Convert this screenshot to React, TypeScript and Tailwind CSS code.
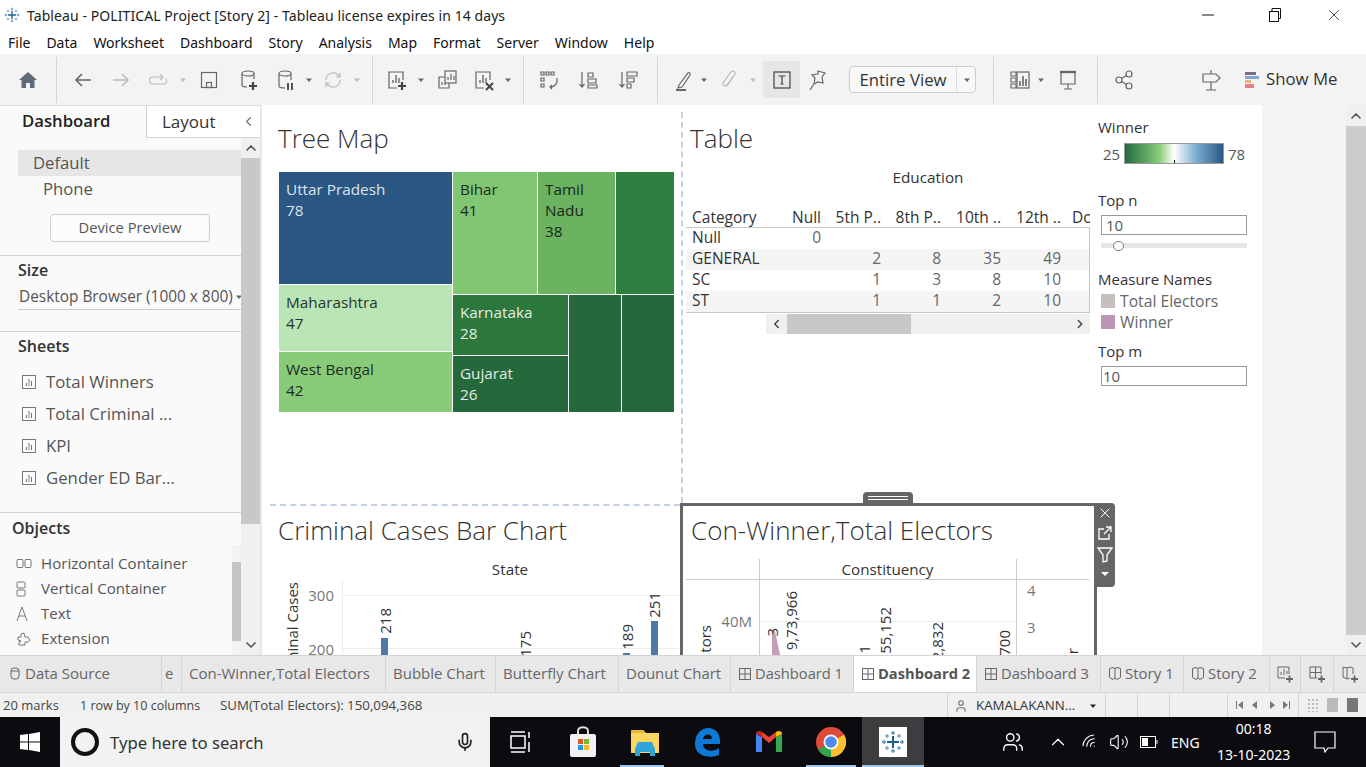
import { ReactNode } from "react";
import { X, ChevronUp, ChevronDown, ChevronLeft, ChevronRight, Wifi, Volume2, User, Users, Mic } from "lucide-react";

const Ico = ({ children, c = "#666" }: { children: ReactNode; c?: string }) => (
  <svg width="24" height="24" viewBox="0 0 24 24" fill="none" stroke={c} strokeWidth="1.2" className="shrink-0">
    {children}
  </svg>
);

const Caret = ({ ml, c = "#666" }: { ml: string; c?: string }) => (
  <svg width="8" height="24" viewBox="0 0 8 24" className={`shrink-0 ${ml}`}>
    <path d="M1 10.5h6L4 14z" fill={c} />
  </svg>
);

const Sep = ({ ml }: { ml: string }) => <div className={`w-px h-[46px] bg-[#d4d4d4] shrink-0 ${ml}`} />;

const Plus = () => <path d="M13 18h8M17 14v8" stroke="#444" strokeWidth="2.2" />;

const Bars = () => <path d="M8 15v-3M11 15V7M14 15v-5" strokeWidth="1.4" />;

const TableauMark = ({ size = 16 }: { size?: number }) => (
  <svg width={size} height={size} viewBox="0 0 24 24" stroke="#2f6f9f" strokeWidth="1.4" fill="none">
    <path d="M12 6v12M6 12h12" strokeWidth="2" stroke="#1f5f8f" />
    <path d="M12 1v4M10 3h4M12 19v4M10 21h4M1 12h4M3 10v4M19 12h4M21 10v4" stroke="#5a94bd" />
    <path d="M6 4v4M4 6h4M18 4v4M16 6h4M6 16v4M4 18h4M18 16v4M16 18h4" stroke="#7aa7c7" />
  </svg>
);

const Toolbar = () => (
  <div className="h-[51px] bg-[#f3f3f3] flex items-center shrink-0">
    <div className="ml-4">
      <svg width="24" height="24" viewBox="0 0 24 24" fill="#5f6b7a"><path d="M12 4l9 8h-2.500v8h-4.500v-5h-4v5H5.500v-8H3z" /></svg>
    </div>
    <Sep ml="ml-4" />
    <div className="ml-[14px]"><Ico><path d="M20 12H5M11 6l-6 6 6 6" strokeWidth="1.6" /></Ico></div>
    <div className="ml-[14px]"><Ico c="#bbb"><path d="M4 12h15M13 6l6 6-6 6" strokeWidth="1.6" /></Ico></div>
    <div className="ml-[13px]"><Ico c="#bbb"><path d="M17 9H7a3 3 0 0 0 0 7h11a3 3 0 0 0 2-5M14 6l3 3-3 3" /></Ico></div>
    <Caret ml="ml-[9px]" c="#bbb" />
    <div className="ml-[10px]"><Ico><rect x="4.500" y="4.500" width="15" height="15" /><rect x="9.500" y="14.500" width="5" height="5" /></Ico></div>
    <div className="ml-[15px]"><Ico><path d="M6 6v11c0 1 1 2 5 2M18 6v5" /><ellipse cx="12" cy="5.500" rx="6" ry="2.500" /><Plus /></Ico></div>
    <div className="ml-[13px]"><Ico><path d="M6 6v12c0 1 2 2 6 2M18 6v6" /><ellipse cx="12" cy="5.500" rx="6" ry="2.500" /><path d="M15 15v7M19 15v7" stroke="#444" strokeWidth="1.8" /></Ico></div>
    <Caret ml="ml-2" />
    <div className="ml-2"><Ico c="#bbb"><path d="M5 12a7 7 0 0 1 12-5l2 2M19 12a7 7 0 0 1-12 5l-2-2M19 5v4h-4M5 19v-4h4" /></Ico></div>
    <Caret ml="ml-2" c="#bbb" />
    <Sep ml="ml-[11px]" />
    <div className="ml-3"><Ico><path d="M18 12V4H4v16h8" /><Bars /><Plus /></Ico></div>
    <Caret ml="ml-2" />
    <div className="ml-[10px]"><Ico><rect x="10" y="3" width="11" height="12" /><path d="M13 12V9M16 12V6M19 12V8" /><path d="M10 9H4v11h10v-5" /><path d="M7 17v-3M10 17v-2" /></Ico></div>
    <div className="ml-[13px]"><Ico><path d="M18 12V4H4v16h8" /><Bars /><path d="M14 15l7 7M21 15l-7 7" stroke="#444" strokeWidth="2" /></Ico></div>
    <Caret ml="ml-2" />
    <Sep ml="ml-[11px]" />
    <div className="ml-[13px]"><Ico><path d="M4 4h3v3H4zM9 4h3v3H9zM14 4h3v3h-3zM4 10h3v3H4zM4 16h3v3H4z" /><path d="M20 10c1 5-2 9-7 9M15 17l-2 2 2 2" /></Ico></div>
    <div className="ml-[15px]"><Ico><path d="M6 4v15M3.500 16L6 19l2.500-3" /><path d="M12 5h5v4h-5zM12 11h8v4h-8z" /><path d="M12 17h9v3h-9z" /></Ico></div>
    <div className="ml-4"><Ico><path d="M6 4v15M3.500 16L6 19l2.500-3" /><path d="M11 4h10v4H11zM11 10h7v4h-7zM11 16h4v4h-4z" /></Ico></div>
    <Sep ml="ml-[17px]" />
    <div className="ml-[13px]"><Ico><path d="M8 17L17 5c1-1 3 0 2 2L11 19l-4 1z" /><path d="M5 22h10" strokeWidth="2" /></Ico></div>
    <Caret ml="ml-[5px]" />
    <div className="ml-[9px]"><Ico c="#bbb"><path d="M17 7l-7 10c-2 2-5 0-4-2l8-11c2-2 5 0 4 2l-8 12" /></Ico></div>
    <Caret ml="ml-2" c="#bbb" />
    <div className="ml-[6px] w-[37px] h-[37px] bg-[#e6e6e6] flex items-center justify-center shrink-0">
      <Ico c="#444"><rect x="4" y="4" width="16" height="16" /><path d="M8.500 8h7M12 8v8M10.500 16h3" /></Ico>
    </div>
    <div className="ml-[5px]"><Ico><path d="M13 3l7 2-3 4 1 6-5-1-4 2 1-6-3-3 6-1zM9 16l-4 6" /></Ico></div>
    <div className="ml-5 w-[127px] h-[27px] bg-[#f8f8f8] border border-[#ccc] rounded-sm flex items-center shrink-0">
      <span className="w-[107px] border-r border-[#ddd] h-full flex items-center justify-center text-[16.800px] text-[#333] whitespace-nowrap">Entire View</span>
      <Caret ml="ml-[6px]" />
    </div>
    <Sep ml="ml-[17px]" />
    <div className="ml-[14px]"><Ico><path d="M3 4h5v4H3zM3 10h5v4H3zM3 16h5v4H3z" /><rect x="9" y="4" width="12" height="16" /><path d="M12 18v-5M15 18V8M18 18v-7" strokeWidth="1.6" /></Ico></div>
    <Caret ml="ml-[5px]" />
    <div className="ml-[11px]"><Ico><path d="M4 4h16M5 5v11h14V5M12 16v5M8 21h8" /><path d="M4 4h16" strokeWidth="2.400" /></Ico></div>
    <Sep ml="ml-[17px]" />
    <div className="ml-[14px]"><Ico><circle cx="17" cy="6" r="3" /><circle cx="7" cy="12" r="3" /><circle cx="17" cy="18" r="3" /><path d="M9.500 10.500l5-3M9.500 13.500l5 3" /></Ico></div>
    <div className="ml-[63px]"><Ico><path d="M12 2v4M12 14v8M7 22h10M4 6h13l4 4-4 4H4z" /></Ico></div>
    <div className="ml-[22px] w-[14px] flex flex-col gap-px shrink-0">
      <div className="h-[3px] w-[11px] bg-[#7b6a8f]" />
      <div className="h-[3px] bg-[#7fa8cf]" />
      <div className="h-[3px] w-[6px] bg-[#eeb27b]" />
      <div className="h-[4px] w-[9px] bg-[#ee7c85]" />
    </div>
    <span className="ml-[7px] text-[16.800px] text-[#333] -mt-[2px]">Show Me</span>
  </div>
);

const SheetIcon = () => (
  <svg width="14" height="14" viewBox="0 0 14 14" fill="none" stroke="#777" className="shrink-0">
    <rect x=".5" y=".5" width="13" height="13" />
    <path d="M4.500 11V8M7 11V4M9.500 11V6" />
  </svg>
);

const LeftPanel = () => (
  <div className="w-[262px] bg-[#fafafa] flex flex-col shrink-0 border-r-2 border-[#e8e8e8]">
    <div className="flex h-[33px] shrink-0 border-t border-[#ddd]">
      <div className="w-[146px] pl-[22px] text-[16.700px] font-semibold text-[#222] leading-[30px]">Dashboard</div>
      <div className="flex-1 border-l border-b border-[#d4d4d4] flex items-center text-[#333] text-[17px] bg-white">
        <span className="ml-[15px]">Layout</span>
        <ChevronLeft className="ml-[25px] text-[#777]" size={15} />
      </div>
    </div>
    <div className="flex flex-1 min-h-0">
      <div className="w-[241px] shrink-0 flex flex-col">
        <div className="mt-3 ml-[18px] h-[26px] bg-[#e6e6e6] pl-[15px] text-[16.700px] leading-[26px] text-[#555]">Default</div>
        <div className="ml-[43px] h-[26px] text-[16.700px] leading-[26px] text-[#555]">Phone</div>
        <div className="mt-3 ml-[50px] w-[160px] h-[28px] border border-[#ccc] rounded-sm bg-[#fcfcfc] text-center text-[14.700px] leading-[24px] text-[#555]">Device Preview</div>
        <div className="mt-[13px] border-t border-[#d0d0d0] pt-[3px] pl-[18px] font-semibold text-[16px] leading-[22px] text-[#333]">Size</div>
        <div className="ml-[18px] mt-[4px] h-[25px] border-b border-[#ccc] flex items-center text-[15.400px] text-[#555] whitespace-nowrap overflow-hidden">
          <span className="ml-px">Desktop Browser (1000 x 800)</span>
          <Caret ml="ml-[2px]" />
        </div>
        <div className="mt-[21px] border-t border-[#d0d0d0] pt-[3px] pl-[18px] font-semibold text-[16px] leading-[22px] text-[#333]">Sheets</div>
        <div className="mt-[9px] ml-[22px] flex flex-col text-[16.800px] text-[#555]">
          {["Total Winners", "Total Criminal ...", "KPI", "Gender ED Bar..."].map((s) => (
            <div key={s} className="h-8 flex items-center gap-[10px]"><SheetIcon />{s}</div>
          ))}
        </div>
        <div className="mt-[18px] border-t border-[#d0d0d0] pt-[4px] pl-3 font-semibold text-[16px] leading-[22px] text-[#333]">Objects</div>
        <div className="flex flex-1 mt-[6px] min-h-0">
          <div className="w-[232px] pt-[6px] pl-4 text-[15.100px] text-[#555] flex flex-col whitespace-nowrap">
            <div className="h-[25px] flex items-center">
              <svg width="16" height="16" viewBox="0 0 16 16" fill="none" stroke="#777" className="mr-[9px]"><rect x="1" y="3.500" width="6" height="8" rx="1" /><rect x="9" y="3.500" width="6" height="8" rx="1" /></svg>
              Horizontal Container
            </div>
            <div className="h-[25px] flex items-center">
              <svg width="16" height="16" viewBox="0 0 16 16" fill="none" stroke="#777" className="mr-[9px]"><rect x="1" y="1" width="8" height="6" rx="1" /><rect x="1" y="9" width="8" height="6" rx="1" /></svg>
              Vertical Container
            </div>
            <div className="h-[25px] flex items-center">
              <svg width="16" height="16" viewBox="0 0 16 16" fill="none" stroke="#777" className="mr-[9px]"><path d="M1 15L6 1l5 14M3 10h6" /></svg>
              Text
            </div>
            <div className="h-[25px] flex items-center">
              <svg width="16" height="16" viewBox="0 0 16 16" fill="none" stroke="#777" className="mr-[9px]"><path d="M2 6h3V3l3-1 1 4h3l2 3-2 2H9v3H3v-3l2-1-3-1z" /></svg>
              Extension
            </div>
          </div>
          <div className="w-[9px] bg-[#f3f3f3] flex flex-col">
            <div className="h-[17px]" />
            <div className="h-[79px] bg-[#c4c4c4]" />
          </div>
        </div>
      </div>
      <div className="w-[19px] bg-[#f0f0f0] flex flex-col items-center">
        <ChevronUp size={16} className="my-[2px] text-[#555] shrink-0" strokeWidth={2.500} />
        <div className="w-full h-[366px] bg-[#c8c8c8]" />
        <div className="flex-1" />
        <ChevronDown size={16} className="mb-[2px] text-[#555]" strokeWidth={2.500} />
      </div>
    </div>
  </div>
);

const Tile = ({ cls, name, n }: { cls: string; name?: string; n?: string }) => (
  <div className={`pl-[7px] pt-[7px] text-[15.300px] leading-[21px] ${cls}`}>
    {name && <div>{name}</div>}
    {n && <div>{n}</div>}
  </div>
);

const TreeMap = () => (
  <div className="ml-px mt-[17px] w-[395px] h-[240px] flex gap-px">
    <div className="w-[173px] flex flex-col gap-px">
      <Tile cls="h-[112px] bg-[#2a5783] text-[#dde4ec]" name="Uttar Pradesh" n="78" />
      <Tile cls="h-[66px] bg-[#bae6b6] text-[#2b332b]" name="Maharashtra" n="47" />
      <Tile cls="flex-1 bg-[#88cc7a] text-[#1f2a1f]" name="West Bengal" n="42" />
    </div>
    <div className="flex-1 flex flex-col gap-px">
      <div className="h-[122px] flex gap-px">
        <Tile cls="w-[84px] bg-[#80c673] text-[#1f2a1f]" name="Bihar" n="41" />
        <div className="w-[77px] pl-[7px] pt-[7px] text-[15.300px] leading-[21px] bg-[#6bb361] text-[#1a261a]">Tamil<br />Nadu<br />38</div>
        <div className="flex-1 bg-[#2f7f41]" />
      </div>
      <div className="flex-1 flex gap-px">
        <div className="w-[115px] flex flex-col gap-px">
          <Tile cls="h-[60px] bg-[#2c773c] text-[#e2ece4]" name="Karnataka" n="28" />
          <Tile cls="flex-1 bg-[#24693c] text-[#e2ece4]" name="Gujarat" n="26" />
        </div>
        <div className="w-[52px] bg-[#24693c]" />
        <div className="flex-1 bg-[#24693c]" />
      </div>
    </div>
  </div>
);

const rows = [
  ["Null", "0", "", "", "", ""],
  ["GENERAL", "", "2", "8", "35", "49"],
  ["SC", "", "1", "3", "8", "10"],
  ["ST", "", "1", "1", "2", "10"],
];

const HeaderCell = ({ t }: { t: string }) => <div className="w-[60px] text-right shrink-0">{t}</div>;

const TablePanel = () => (
  <div className="w-[407px] shrink-0 pl-[3px]">
    <div className="pl-[4px] pt-4 text-[26px] font-light leading-[34px] text-[#333]">Table</div>
    <div className="mt-3 h-5 pl-[80px] w-[404px] text-center text-[15.300px] leading-5 font-medium text-[#333]">Education</div>
    <div className="mt-5 h-5 flex w-[404px] text-[15.500px] leading-5 text-[#333] overflow-hidden whitespace-nowrap">
      <div className="w-[75px] pl-[6px] shrink-0">Category</div>
      <HeaderCell t="Null" />
      <HeaderCell t="5th P.." />
      <HeaderCell t="8th P.." />
      <HeaderCell t="10th .." />
      <HeaderCell t="12th .." />
      <div className="pl-[11px] shrink-0">Do</div>
    </div>
    <div className="w-[404px] border-t border-b border-r border-[#c8c8c8] text-[15.500px] flex flex-col">
      {rows.map((r, i) => (
        <div key={r[0]} className={`h-[21px] pb-px flex items-center ${i % 2 === 1 ? "bg-[#f5f5f5]" : "bg-white"}`}>
          <div className="w-[75px] pl-[6px] text-[#333] shrink-0">{r[0]}</div>
          {r.slice(1).map((v, j) => (
            <div key={j} className="w-[60px] text-right text-[#666] shrink-0">{v}</div>
          ))}
        </div>
      ))}
    </div>
    <div className="mt-px ml-[80px] w-[324px] h-5 bg-[#f0f0f0] flex items-center">
      <ChevronLeft size={14} className="w-[21px] text-[#444] shrink-0" strokeWidth={2.500} />
      <div className="w-[124px] h-full bg-[#c8c8c8]" />
      <div className="flex-1" />
      <ChevronRight size={14} className="mr-[3px] text-[#444]" strokeWidth={2.500} />
    </div>
  </div>
);

const Legend = () => (
  <div className="pl-2 pt-3 flex-1 text-[15px] leading-5 text-[#333]">
    <div>Winner</div>
    <div className="mt-[6px] flex items-center h-[21px]">
      <span className="w-[26px] pl-[5px] text-[#555] text-[15px]">25</span>
      <div className="relative w-[100px] h-[21px] border border-[#999] bg-[linear-gradient(to_right,#24693c,#88cc7a_35%,#ffffff_50%,#7fb0d3_72%,#2a5783)]">
        <div className="absolute left-1/2 bottom-0 w-px h-[3px] bg-black" />
      </div>
      <span className="ml-1 text-[#555] text-[15px]">78</span>
    </div>
    <div className="mt-[26px]">Top n</div>
    <div className="mt-[5px] ml-[3px] w-[146px] h-5 border border-[#999] pl-1 text-[#555] leading-[18px]">10</div>
    <div className="relative mt-2 ml-[3px] w-[146px] h-[5px] bg-[#e6e6e6]">
      <div className="absolute left-3 -top-[2px] w-[11px] h-[10px] rounded-full border border-[#777] bg-white" />
    </div>
    <div className="mt-[21px]">Measure Names</div>
    <div className="mt-px ml-[3px] h-[21px] flex items-center gap-[5px] text-[15.700px] text-[#666]"><div className="w-[14px] h-[14px] bg-[#c7bebe]" />Total Electors</div>
    <div className="ml-[3px] h-[21px] flex items-center gap-[5px] text-[15.700px] text-[#666]"><div className="w-[14px] h-[14px] bg-[#bd95b4]" />Winner</div>
    <div className="mt-[9px]">Top m</div>
    <div className="mt-[5px] ml-[3px] w-[146px] h-5 border border-[#999] pl-px text-[#555] leading-[18px]">10</div>
  </div>
);

const VText = ({ cls, t }: { cls: string; t: string }) => (
  <div className={`absolute w-5 flex justify-center text-[15px] leading-5 text-[#333] ${cls}`}>
    <span className="[writing-mode:vertical-rl] rotate-180 whitespace-nowrap">{t}</span>
  </div>
);

const BarChart = () => (
  <div className="relative flex-1 overflow-hidden">
    <div className="absolute left-[72px] top-1 w-[336px] text-center text-[15.300px] leading-5 font-medium text-[#333]">State</div>
    <div className="absolute left-[72px] top-[25px] bottom-0 w-px bg-[#eee]" />
    <div className="absolute left-[72px] top-10 w-[336px] h-px bg-[#eee]" />
    <div className="absolute left-[72px] top-[93px] w-[336px] h-px bg-[#eee]" />
    <div className="absolute left-[24px] top-[30px] w-10 text-right text-[15px] leading-5 text-[#777]">300</div>
    <div className="absolute left-[24px] top-[84px] w-10 text-right text-[15px] leading-5 text-[#777]">200</div>
    <VText cls="left-[12px] top-[27px] font-medium" t="Criminal Cases" />
    <div className="absolute left-[111px] top-[83px] w-[7px] h-5 bg-[#4e79a7]" />
    <div className="absolute left-[353px] top-[98px] w-[7px] h-[5px] bg-[#4e79a7]" />
    <div className="absolute left-[381px] top-[66px] w-[7px] h-10 bg-[#4e79a7]" />
    <VText cls="left-[105px] top-[53px]" t="218" />
    <VText cls="left-[245px] top-[76px]" t="175" />
    <VText cls="left-[347px] top-[69px]" t="189" />
    <VText cls="left-[374px] top-[37px]" t="251" />
  </div>
);

const ComboChart = () => (
  <div className="relative flex-1 overflow-hidden">
    <div className="absolute left-[76px] top-1 bottom-0 w-px bg-[#ccc]" />
    <div className="absolute left-[333px] top-1 bottom-0 w-px bg-[#ccc]" />
    <div className="absolute left-[76px] top-1 w-[257px] text-center text-[15.200px] leading-5 font-medium text-[#333]">Constituency</div>
    <div className="absolute left-[3px] top-6 w-[403px] h-px bg-[#ccc]" />
    <div className="absolute left-[77px] top-[66px] w-[256px] h-px bg-[#eee]" />
    <div className="absolute left-[20px] top-[56px] w-[49px] text-right text-[15px] leading-5 text-[#777]">40M</div>
    <div className="absolute left-[344px] top-[25px] text-[15px] leading-5 text-[#777]">4</div>
    <div className="absolute left-[344px] top-[62px] text-[15px] leading-5 text-[#777]">3</div>
    <VText cls="left-[12px] top-[70px] font-medium" t="tors" />
    <svg width="12" height="26" viewBox="0 0 12 26" className="absolute left-[87px] top-[74px]"><path d="M2 2l3 0 5 24H2z" fill="#c59ebc" /></svg>
    <VText cls="left-[79px] top-[73px]" t="3" />
    <VText cls="left-[98px] top-[36px]" t="9,73,966" />
    <VText cls="left-[171px] top-[90px]" t="1" />
    <VText cls="left-[192px] top-[52px]" t="55,152" />
    <VText cls="left-[244px] top-[67px]" t="2,832" />
    <VText cls="left-[311px] top-[75px]" t="700" />
    <VText cls="left-[379px] top-[93px] font-medium" t="r" />
  </div>
);

const Canvas = () => (
  <div className="w-[1000px] shrink-0 bg-white pl-2 flex flex-col h-full">
    <div className="h-[398px] flex shrink-0">
      <div className="w-[411px] shrink-0 pl-2 pt-4">
        <div className="text-[26px] font-light leading-[34px] text-[#333]">Tree Map</div>
        <TreeMap />
      </div>
      <div className="w-[2px] mt-[7px] border-l-2 border-dashed border-[#c5d0e4] shrink-0" />
      <TablePanel />
      <Legend />
    </div>
    <div className="flex flex-1 min-h-0">
      <div className="w-[410px] shrink-0 flex flex-col">
        <div className="mt-px border-t-2 border-dashed border-[#c5d0e4] pl-2 pt-[7px] text-[26px] font-light leading-[34px] text-[#333] whitespace-nowrap">Criminal Cases Bar Chart</div>
        <div className="flex-1 flex min-h-0 mt-2"><BarChart /></div>
      </div>
      <div className="relative w-[417px] shrink-0 border-[3px] border-b-0 border-[#666] flex flex-col">
        <div className="absolute left-[180px] -top-[14px] w-[50px] h-3 bg-[#666] rounded-t flex flex-col items-center justify-center gap-[2px]">
          <div className="w-[40px] h-px bg-white" />
          <div className="w-[40px] h-px bg-white" />
        </div>
        <div className="absolute left-[412px] -top-[3px] w-5 h-[84px] bg-[#666] rounded-r-sm flex flex-col items-center pt-[2px] gap-[2px] text-white z-10">
          <X size={16} strokeWidth={1.500} />
          <svg width="18" height="20" viewBox="0 0 18 20" fill="none" stroke="white" strokeWidth="1.300"><path d="M13 11v5H3V6h5M8 11l7-7M10 4h5v5" /></svg>
          <svg width="18" height="20" viewBox="0 0 18 20" fill="none" stroke="white" strokeWidth="1.300"><path d="M2 3h14l-5 7v6l-4 1v-7z" /></svg>
          <svg width="10" height="14" viewBox="0 0 10 14"><path d="M1 5h8L5 9z" fill="white" /></svg>
        </div>
        <div className="pl-2 pt-[7px] text-[26px] font-light leading-[34px] text-[#333] whitespace-nowrap">Con-Winner,Total Electors</div>
        <div className="flex-1 flex min-h-0 mt-2"><ComboChart /></div>
      </div>
    </div>
  </div>
);

const tabs = [
  { t: "", w: "w-[20px] pl-[3px]", label: "e" },
  { t: "", w: "w-[204px] pl-[7px]", label: "Con-Winner,Total Electors" },
  { t: "", w: "w-[110px] pl-[7px]", label: "Bubble Chart" },
  { t: "", w: "w-[123px] pl-[7px]", label: "Butterfly Chart" },
  { t: "", w: "w-[112px] pl-[7px]", label: "Dounut Chart" },
  { t: "d", w: "w-[123px] pl-2", label: "Dashboard 1" },
  { t: "a", w: "w-[123px] pl-2", label: "Dashboard 2" },
  { t: "d", w: "w-[124px] pl-2", label: "Dashboard 3" },
  { t: "s", w: "w-[83px] pl-2", label: "Story 1" },
  { t: "s", w: "w-[86px] pl-2", label: "Story 2" },
];

const DashIcon = () => (
  <svg width="12" height="12" viewBox="0 0 12 12" fill="none" stroke="#666" className="shrink-0"><rect x=".5" y=".5" width="11" height="11" /><path d="M6 0v12M0 6h12" /></svg>
);

const StoryIcon = () => (
  <svg width="12" height="13" viewBox="0 0 12 13" fill="none" stroke="#666" className="shrink-0"><path d="M.5 1.500L4 .5l2 1 2-1 3.500 1v9l-3.500 2-2-1.500-2 1.500-3.500-2zM6 1.500v10" /></svg>
);

const TabBar = () => (
  <div className="h-[38px] shrink-0 bg-[#e8e8e8] border-t border-b border-[#d4d4d4] flex text-[15px] text-[#666] whitespace-nowrap">
    <div className="w-[162px] shrink-0 border-r border-[#d4d4d4] pl-[10px] pb-px flex items-center gap-[5px]">
      <svg width="10" height="13" viewBox="0 0 10 13" fill="none" stroke="#666"><rect x="1" y="1" width="8" height="11" rx="3" /><path d="M1 4h8" /></svg>
      Data Source
    </div>
    {tabs.map((x) => (
      <div key={x.label} className={`${x.w} shrink-0 border-r border-[#d4d4d4] pb-px flex items-center gap-[4px] overflow-hidden ${x.t === "a" ? "bg-white font-bold text-[#555] text-[14.700px]" : ""} ${x.t === "d" ? "text-[14.700px]" : ""}`}>
        {(x.t === "d" || x.t === "a") && <DashIcon />}
        {x.t === "s" && <StoryIcon />}
        {x.label}
      </div>
    ))}
    <div className="w-[31px] shrink-0 border-r border-[#d4d4d4] flex items-center justify-center"><svg width="20" height="20" viewBox="0 0 20 20" fill="none" stroke="#666"><path d="M10 14H3V3h11v7M6 11V8M9 11V5M12 10V7" /><path d="M11 15h7M14.500 11.500v7" strokeWidth="1.800" /></svg></div>
    <div className="w-[33px] shrink-0 border-r border-[#d4d4d4] flex items-center justify-center"><svg width="20" height="20" viewBox="0 0 20 20" fill="none" stroke="#666"><path d="M10 14H3V3h11v7M8.500 3v11M3 8.500h11" /><path d="M11 15h7M14.500 11.500v7" strokeWidth="1.800" /></svg></div>
    <div className="flex-1 flex items-center justify-center"><svg width="20" height="20" viewBox="0 0 20 20" fill="none" stroke="#666"><path d="M10 14l-3 1-4-2V3l4 1 3-1 3 1v6M7 4v11" /><path d="M11 15h7M14.500 11.500v7" strokeWidth="1.800" /></svg></div>
  </div>
);

const StatusBar = () => (
  <div className="h-[24px] shrink-0 bg-[#f0f0f0] flex items-center text-[13.300px] text-[#444] whitespace-nowrap">
    <span className="ml-[3px] w-[77px] text-[13px] pt-[2px]">20 marks</span>
    <span className="w-[140px] text-[12.500px] pt-[2px]">1 row by 10 columns</span>
    <span className="w-[727px] pt-[2px]">SUM(Total Electors): 150,094,368</span>
    <div className="w-[158px] h-full border-l border-[#d4d4d4] flex items-center pl-[6px] pt-px gap-2 text-[#333]">
      <User size={14} className="text-[#777] shrink-0" />KAMALAKANN...
      <Caret ml="ml-[6px]" c="#222" />
    </div>
    <div className="w-[32px] h-full border-l border-[#d4d4d4]" />
    <div className="w-[32px] h-full border-l border-[#d4d4d4]" />
    <div className="w-[58px] h-full border-l border-[#d4d4d4]" />
    <div className="w-[71px] h-full border-l border-[#d4d4d4] flex items-center justify-center">
      <svg width="56" height="10" viewBox="0 0 56 10" fill="#777"><path d="M1 1h1v8H1zM8 1v8L3 5zM22 1v8l-5-4zM35 1v8l5-4zM48 1v8l5-4zM54 1h1v8h-1z" /></svg>
    </div>
    <div className="flex-1 h-full border-l border-[#d4d4d4] flex items-center pl-2 gap-[9px]">
      <div className="w-[11px] h-[14px] bg-[radial-gradient(#bbb_45%,transparent_50%)] bg-[length:4px_4px]" />
      <div className="w-[11px] h-[14px] bg-[#bbb]" />
      <div className="w-[11px] h-[14px] bg-[#777]" />
    </div>
  </div>
);

const Slot = ({ children, cls = "" }: { children: ReactNode; cls?: string }) => (
  <div className={`relative w-[62px] h-full flex items-center justify-center shrink-0 ${cls}`}>{children}</div>
);

const Taskbar = () => (
  <div className="h-[50px] shrink-0 bg-[#0b0b10] flex items-center text-white font-['Noto_Sans',sans-serif]">
    <div className="w-[60px] flex justify-center">
      <svg width="20" height="20" viewBox="0 0 20 20" fill="white"><path d="M0 3l8-1v7.500H0zM9 2l11-2v9.500H9zM0 10.500h8V18l-8-1zM9 10.500h11V20L9 18z" /></svg>
    </div>
    <div className="w-[430px] h-full bg-[#f2f2f2] flex items-center text-[#333] text-[16.700px]">
      <div className="ml-[11px] w-[28px] h-[28px] rounded-full border-[4px] border-[#111] shrink-0" />
      <span className="ml-[11px] flex-1 pt-px">Type here to search</span>
      <Mic size={20} className="mr-[15px] text-[#222]" />
    </div>
    <Slot>
      <svg width="22" height="24" viewBox="0 0 22 24" fill="none" stroke="white" strokeWidth="1.500"><path d="M1 2h14M1 6h14v12H1zM1 22h14M19 2v6M19 12v10" /></svg>
    </Slot>
    <Slot>
      <svg width="30" height="32" viewBox="0 0 30 32"><path d="M10 9V5c0-5 10-5 10 0v4" fill="none" stroke="#ddd" strokeWidth="2" /><rect x="2" y="8" width="26" height="23" rx="2" fill="#f3f3f3" /><rect x="10" y="13" width="5" height="5" fill="#e5532d" /><rect x="16" y="13" width="5" height="5" fill="#7cb82f" /><rect x="10" y="19" width="5" height="5" fill="#1e9ee0" /><rect x="16" y="19" width="5" height="5" fill="#fbb716" /></svg>
    </Slot>
    <Slot>
      <svg width="30" height="30" viewBox="0 0 30 30"><path d="M1 3h12l3 3h13v20H1z" fill="#fcd462" /><path d="M1 3h12l3 3H1z" fill="#e8b73a" /><path d="M5 22l3-7h14l3 7v7h-5v-4H10v4H5z" fill="#2ea6d9" /></svg>
      <div className="absolute bottom-0 left-[6px] w-[44px] h-[2px] bg-[#9cc7ee]" />
    </Slot>
    <Slot>
      <svg width="28" height="30" viewBox="0 0 28 30"><path d="M2 17C2 6 9 1 15 1c7 0 12 5 12 13v3H10c0 7 10 9 16 4v7c-7 3-14 1-14 1C6 28 2 23 2 17zM10 12h9c0-6-8-6-9 0z" fill="#0f7ad6" /></svg>
    </Slot>
    <Slot>
      <svg width="28" height="24" viewBox="0 0 28 24"><path d="M1 22V4l6 3v15z" fill="#4285f4" /><path d="M27 22V4l-6 3v15z" fill="#34a853" /><path d="M7 7L14 13l7-6V2l-7 5-7-5z" fill="#ea4335" /><path d="M1 4c0-3 3-4 6-2v5z" fill="#c5221f" /><path d="M27 4c0-3-3-4-6-2v5z" fill="#fbbc04" /></svg>
    </Slot>
    <Slot>
      <svg width="30" height="30" viewBox="0 0 30 30"><circle cx="15" cy="15" r="15" fill="#dd4b39" /><path d="M15 15L2 22.500A15 15 0 0 0 15 30z" fill="#2fa44f" /><path d="M15 15L15 30A15 15 0 0 0 28 7.500z" fill="#fbc02d" /><path d="M2 22.500L15 15 28 7.500H15A8 8 0 0 0 7 15z" fill="#dd4b39" /><circle cx="15" cy="15" r="7.500" fill="white" /><circle cx="15" cy="15" r="5.800" fill="#4a8bf0" /></svg>
      <div className="absolute bottom-0 left-[6px] w-[50px] h-[2px] bg-[#9cc7ee]" />
    </Slot>
    <Slot cls="bg-[#3d3d3f]">
      <div className="w-[28px] h-[30px] bg-white flex items-center justify-center"><TableauMark size={24} /></div>
      <div className="absolute bottom-0 left-0 w-full h-[2px] bg-[#9cc7ee]" />
    </Slot>
    <div className="ml-[78px]"><Users size={22} strokeWidth={1.500} /></div>
    <ChevronUp size={22} strokeWidth={1.300} className="ml-[23px]" />
    <Wifi size={18} strokeWidth={1.500} className="ml-3 -rotate-45" />
    <Volume2 size={20} strokeWidth={1.300} className="ml-[10px]" />
    <svg width="18" height="12" viewBox="0 0 18 12" fill="none" stroke="white" className="ml-[11px]"><rect x=".5" y=".5" width="15" height="11" /><rect x="2" y="2" width="6" height="8" fill="white" stroke="none" /><path d="M17 4v4" /></svg>
    <span className="ml-[13px] text-[14px]">ENG</span>
    <div className="ml-[15px] w-[78px] text-center text-[14px] leading-[26px]">
      <div>00:18</div>
      <div>13-10-2023</div>
    </div>
    <svg width="22" height="22" viewBox="0 0 22 22" fill="none" stroke="white" strokeWidth="1.200" className="ml-[21px]"><path d="M1 1h20v16h-7l-3 4-1-4H1z" /></svg>
  </div>
);

export default function App() {
  return (
    <div className="w-[1366px] h-[767px] overflow-hidden flex flex-col bg-white font-['Open_Sans',sans-serif]">
      <div className="h-[30px] shrink-0 flex items-center font-['Noto_Sans',sans-serif] text-[14px] tracking-[0.08px] text-[#222]">
        <div className="ml-1 mr-[7px]"><TableauMark /></div>
        <span>Tableau - POLITICAL Project [Story 2] - Tableau license expires in 14 days</span>
        <svg width="12" height="2" viewBox="0 0 12 2" className="ml-auto mr-[55px]"><path d="M0 1h12" stroke="#111" /></svg>
        <svg width="12" height="14" viewBox="0 0 12 14" fill="none" stroke="#111" className="mr-[44px]"><rect x=".5" y="3.500" width="9" height="10" /><path d="M3 3V.5h8.500v10H10" /></svg>
        <X size={18} strokeWidth={1} className="mr-[23px] text-[#111]" />
      </div>
      <div className="h-[24px] shrink-0 flex items-center gap-4 pl-2 font-['Noto_Sans',sans-serif] text-[14px] text-[#111]">
        {["File", "Data", "Worksheet", "Dashboard", "Story", "Analysis", "Map", "Format", "Server", "Window", "Help"].map((m) => (
          <span key={m}>{m}</span>
        ))}
      </div>
      <Toolbar />
      <div className="h-[550px] shrink-0 flex overflow-hidden">
        <LeftPanel />
        <Canvas />
        <div className="w-[84px] bg-[#f3f3f3] shrink-0" />
        <div className="flex-1 bg-[#f0f0f0] flex flex-col items-center">
          <div className="h-[21px] flex items-center"><ChevronUp size={16} className="text-[#555]" strokeWidth={2.500} /></div>
          <div className="w-full h-[509px] bg-[#cdcdcd]" />
          <div className="flex-1 flex items-center"><ChevronDown size={16} className="text-[#555]" strokeWidth={2.500} /></div>
        </div>
      </div>
      <TabBar />
      <StatusBar />
      <Taskbar />
    </div>
  );
}
